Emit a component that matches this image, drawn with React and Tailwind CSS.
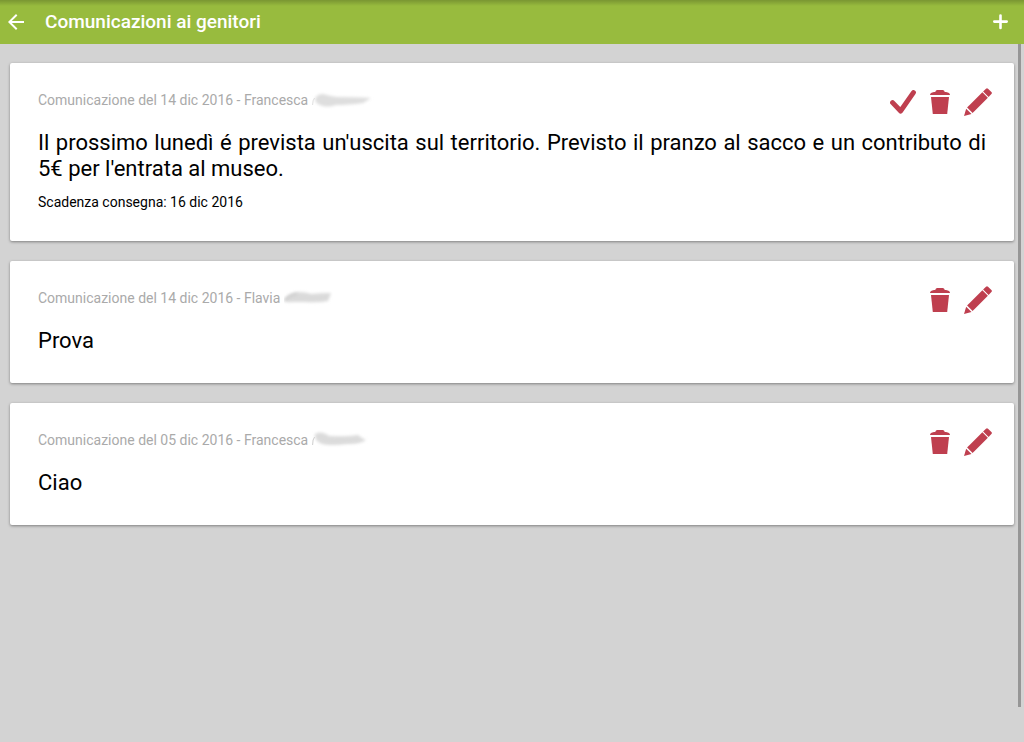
import React from "react";

const communications = [
  {
    id: 1,
    meta: "Comunicazione del 14 dic 2016 - Francesca",
    text: "Il prossimo lunedì é prevista un'uscita sul territorio. Previsto il pranzo al sacco e un contributo di 5€ per l'entrata al museo.",
    due: "Scadenza consegna: 16 dic 2016",
    smudge: "a",
    confirm: true,
  },
  {
    id: 2,
    meta: "Comunicazione del 14 dic 2016 - Flavia",
    text: "Prova",
    smudge: "b",
  },
  {
    id: 3,
    meta: "Comunicazione del 05 dic 2016 - Francesca",
    text: "Ciao",
    smudge: "c",
  },
];

function BackIcon() {
  return (
    <svg viewBox="0 0 16 16" className="h-4 w-4" fill="currentColor" aria-hidden="true">
      <path d="M16 7v2H3.8l5.6 5.6L8 16 0 8l8-8 1.4 1.4L3.8 7z" />
    </svg>
  );
}

function PlusIcon() {
  return (
    <svg viewBox="0 0 16 16" className="h-4 w-4" fill="none" stroke="currentColor" strokeWidth="2.6" strokeLinecap="round" aria-hidden="true">
      <path d="M8.500 1.500v12.400M2.300 7.600h12.400" />
    </svg>
  );
}

function CheckIcon() {
  return (
    <svg viewBox="0 0 26 24" className="h-6 w-[26px]" fill="none" stroke="currentColor" strokeWidth="5" strokeLinejoin="round" strokeLinecap="round" aria-hidden="true">
      <path d="M2.6 12.6l8 8.4L23.4 2.6" />
    </svg>
  );
}

function TrashIcon() {
  return (
    <svg viewBox="0 0 20 24" className="h-6 w-5" fill="currentColor" aria-hidden="true">
      <path d="M5.200 2Q5.800 0 7.200 0h5.600q1.400 0 2 2H16Q20 2.500 20 5H0Q0 2.500 4 2z" />
      <path d="M1 7h18l-1.800 17H2.800z" />
    </svg>
  );
}

function PencilIcon() {
  return (
    <svg viewBox="0 0 28 28" className="h-7 w-7" fill="currentColor" aria-hidden="true">
      <path d="M22 .7q1-1 2 0l3.400 3.400q1 1 0 2L24.600 9 19.100 3.500z" />
      <path d="M18.400 4.200l5.500 5.500L8.600 25 3.100 19.500z" />
      <path d="M2.200 20.700l5.300 5.300L0 28z" />
    </svg>
  );
}

function Smudge({ kind }) {
  const blur = `soft-${kind}`;
  return (
    <svg viewBox="0 0 64 20" className="h-5 w-16" aria-hidden="true">
      <defs>
        <filter id={blur} x="-20%" y="-80%" width="140%" height="260%">
          <feGaussianBlur stdDeviation="1.8" />
        </filter>
      </defs>
      {kind === "a" && (
        <>
          <path d="M.6 15q0-5 2-7" fill="none" stroke="#dedede" />
          <path d="M3 9q2-5 8-5 6 2 14 3 14 0 34 1l-8 5q-15 2-27 2-9 3-16 0-5-2-5-6z" fill="#dedede" filter={`url(#${blur})`} />
        </>
      )}
      {kind === "b" && (
        <>
          <path d="M0 12q2-6 13-8 9 0 14 2 10-1 20-1l-3 8q-10 2-23 1-9 0-13 0-8 1-8-2z" fill="#dadada" filter={`url(#${blur})`} />
          <path d="M1 12q6-5 12-6" fill="none" stroke="#cecece" strokeWidth="2" filter={`url(#${blur})`} />
        </>
      )}
      {kind === "c" && (
        <>
          <path d="M.6 15q0-6 2-8" fill="none" stroke="#cdcdcd" />
          <path d="M3 4q6-4 14 2 18 1 29-1 3 3 8 5-5 4-19 4-17 2-25 0Q2 11 3 4z" fill="#dbdbdb" filter={`url(#${blur})`} />
          <path d="M14 12q18 1 33-1" fill="none" stroke="#dcdcdc" filter={`url(#${blur})`} />
        </>
      )}
    </svg>
  );
}

function Card({ item }) {
  return (
    <article className="rounded-[2px] bg-white px-7 pt-[27px] pb-[29px] shadow-[0_1px_3px_rgba(0,0,0,0.4)]">
      <div className="flex h-5 items-center justify-between">
        <p className="flex items-center gap-1 text-sm text-[#aaa]">
          {item.meta}
          <Smudge kind={item.smudge} />
        </p>
        <div className="-mr-1.5 flex items-center gap-3.5 pt-1 text-[#bf3f4f]">
          {item.confirm && (
            <button type="button" aria-label="Conferma"><CheckIcon /></button>
          )}
          <button type="button" aria-label="Elimina"><TrashIcon /></button>
          <button type="button" aria-label="Modifica"><PencilIcon /></button>
        </div>
      </div>
      <p className="mt-5 text-justify text-[22px] leading-[26px] text-black">{item.text}</p>
      {item.due && <p className="mt-2.5 text-sm text-black">{item.due}</p>}
    </article>
  );
}

export default function App() {
  return (
    <div className="flex min-h-screen flex-col bg-[#d3d3d3] font-[Roboto,sans-serif]">
      <header className="flex h-11 items-center justify-between bg-[#98bb3e] bg-linear-to-b from-black/20 to-transparent to-[6px] px-2 text-white">
        <div className="flex items-center gap-[21px]">
          <button type="button" aria-label="Indietro"><BackIcon /></button>
          <h1 className="text-[19px] leading-6 font-medium">Comunicazioni ai genitori</h1>
        </div>
        <button type="button" aria-label="Aggiungi" className="mr-2"><PlusIcon /></button>
      </header>
      <main className="relative flex grow flex-col gap-5 px-2.5 pt-[19px] pb-5">
        {communications.map((item) => (
          <Card key={item.id} item={item} />
        ))}
        <div className="absolute top-0 right-[3px] h-[95%] w-[3px] bg-[#969696]" />
      </main>
    </div>
  );
}
